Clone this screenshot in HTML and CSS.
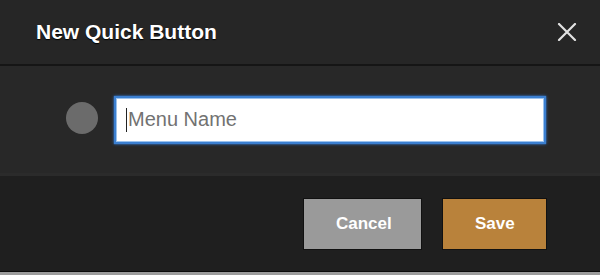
FILE: index.html
```html
<!DOCTYPE html>
<html>
<head>
<meta charset="utf-8">
<link rel="stylesheet" href="styles.css">
</head>
<body>
<div class="dialog">
  <div class="header">
    <div class="title">New Quick Button</div>
    <button class="close" aria-label="Close">
      <svg width="20" height="18" viewBox="0 0 20 18"><path d="M2 1 L18 17 M18 1 L2 17" stroke="#e2e2e2" stroke-width="2.2" stroke-linecap="round"/></svg>
    </button>
  </div>
  <div class="body">
    <div class="dot"></div>
    <div class="field"><span class="caret"></span><span class="placeholder">Menu Name</span></div>
  </div>
  <div class="footer">
    <button class="btn cancel">Cancel</button>
    <button class="btn save">Save</button>
  </div>
  <div class="edge"></div>
</div>
</body>
</html>
```
FILE: styles.css
```css
html, body {
  margin: 0;
  padding: 0;
  background: #262626;
}
.dialog {
  width: 600px;
  height: 275px;
  display: flex;
  flex-direction: column;
  font-family: "Liberation Sans", Arial, sans-serif;
}
.header {
  height: 64px;
  background: #262626;
  border-bottom: 2px solid #151515;
  display: flex;
  align-items: center;
  justify-content: space-between;
  padding: 0 22px 0 36px;
}
.title {
  color: #ffffff;
  font-size: 21px;
  font-weight: bold;
  text-shadow: 0 1px 1px #000;
}
.close {
  background: none;
  border: none;
  padding: 0;
  width: 22px;
  height: 20px;
  display: flex;
  align-items: center;
  justify-content: center;
}
.body {
  height: 107px;
  background: #282828;
  display: flex;
  align-items: center;
  padding-left: 66px;
  gap: 18px;
}
.dot {
  width: 32px;
  height: 32px;
  border-radius: 50%;
  background: #6b6b6b;
  margin-top: -3px;
}
.field {
  width: 428px;
  height: 44px;
  box-sizing: border-box;
  background: #ffffff;
  border: 1px solid #9cc3ee;
  box-shadow: 0 0 1px 2px #3b7fd0, 0 0 3px 2px #2d6bb8;
  display: flex;
  align-items: center;
  padding-left: 9px;
}
.caret {
  width: 1px;
  height: 24px;
  background: #222;
  margin-right: 1px;
}
.placeholder {
  color: #727272;
  font-size: 20px;
}
.footer {
  flex: 1;
  background: #1f1f1f;
  border-top: 3px solid #2b2b2b;
  border-bottom: 1px solid #0c0c0c;
  display: flex;
  justify-content: flex-end;
  align-items: flex-start;
  padding: 22px 53px 0 0;
  gap: 20px;
}
.btn {
  height: 52px;
  padding: 0 32px;
  border: 1px solid #111;
  color: #ffffff;
  font-family: "Liberation Sans", Arial, sans-serif;
  font-size: 17px;
  font-weight: bold;
}
.cancel {
  background: #9a9a9a;
  width: 119px;
}
.save {
  background: #b9823b;
  width: 105px;
}
.edge {
  height: 3px;
  background: #9c9c9c;
}
```
